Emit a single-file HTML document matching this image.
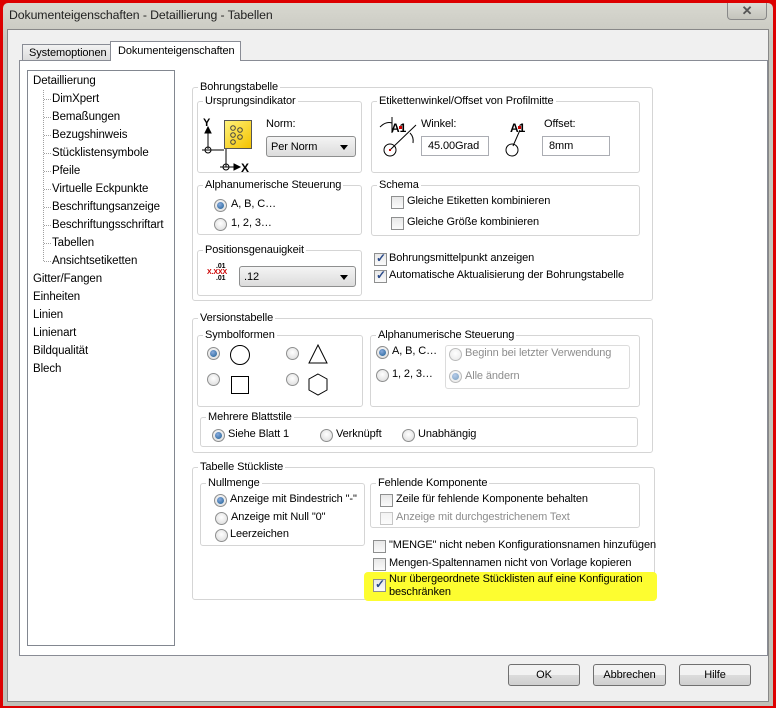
<!DOCTYPE html>
<html><head><meta charset="utf-8"><style>
*{box-sizing:border-box;margin:0;padding:0}
body{width:776px;height:708px;position:relative;overflow:hidden;background:#d00;font-family:"Liberation Sans",Arial,sans-serif;font-size:11px;letter-spacing:-0.1px;color:#000}
.a{position:absolute;white-space:nowrap}
.g{position:absolute;border:1px solid #d5d5d5;border-radius:3px}
.gl{position:absolute;background:#fff;padding:0 2px;top:-8px;left:5px;line-height:14px;white-space:nowrap}
.rb{position:absolute;width:13px;height:13px;border-radius:50%;border:1px solid #8e8f8f;background:radial-gradient(circle at 50% 40%,#fff,#d8d8d8)}
.rb.on::after{content:"";position:absolute;left:2px;top:2px;width:7px;height:7px;border-radius:50%;background:radial-gradient(circle at 40% 35%,#8ad,#1d5f93)}
.rb.dis{opacity:.6}
.cb{position:absolute;width:13px;height:13px;border:1px solid #8e8f8f;background:linear-gradient(#e8e8e8,#fafafa)}
.cb.on::after{content:"✓";position:absolute;left:1px;top:-3px;font-size:12px;color:#2a4a8a;font-weight:bold}
.dd{position:absolute;border:1px solid #8e8f8f;border-radius:3px;background:linear-gradient(#f4f4f4,#dcdcdc);padding-left:4px;line-height:20px}
.dd::after{content:"";position:absolute;right:7px;top:8px;border:4px solid transparent;border-top:5px solid #000;border-bottom:0}
.tb{position:absolute;border:1px solid #abadb3;background:#fff;padding-left:6px;line-height:18px}
.btn{position:absolute;border:1px solid #707070;border-radius:3px;background:linear-gradient(#f2f2f2 50%,#dcdcdc 50%,#cfcfcf);text-align:center;line-height:20px}
.dis{color:#8d8d8d}
</style></head><body>
<div class="a" style="left:3px;top:3px;width:770px;height:703px;background:linear-gradient(#d8d8d0,#c6c6be 40px,#c0c0b8);border-radius:5px 5px 0 0"></div>
<div class="a" style="left:9px;top:8px;font-size:12.3px;color:#222">Dokumenteigenschaften - Detaillierung - Tabellen</div>
<div class="a" style="left:727px;top:3px;width:40px;height:17px;border:1px solid #888;border-top:0;border-radius:0 0 4px 4px;background:linear-gradient(#dcdcd6,#c4c4bc);text-align:center;font-weight:bold;font-size:13px;line-height:15px;color:#555">✕</div>
<div class="a" style="left:7px;top:29px;width:762px;height:673px;background:#f0f0f0;border:1px solid #888"></div>
<div class="a" style="left:19px;top:60px;width:749px;height:596px;background:#fff;border:1px solid #898c95"></div>
<div class="a" style="left:22px;top:44px;width:89px;height:17px;border:1px solid #898c95;background:linear-gradient(#f2f2f2,#dcdcdc);padding-left:6px;line-height:16px">Systemoptionen</div>
<div class="a" style="left:110px;top:41px;width:131px;height:20px;border:1px solid #898c95;border-bottom:0;background:#fff;padding-left:7px;line-height:18px">Dokumenteigenschaften</div>
<div class="a" style="left:27px;top:70px;width:148px;height:576px;border:1px solid #828790;background:#fff"></div>
<div class="a" style="left:43px;top:90px;width:0;height:171px;border-left:1px dotted #a0a0a0"></div>
<div id="tree"></div>
<script>
var t=[["Detaillierung",0],["DimXpert",1],["Bemaßungen",1],["Bezugshinweis",1],["Stücklistensymbole",1],["Pfeile",1],["Virtuelle Eckpunkte",1],["Beschriftungsanzeige",1],["Beschriftungsschriftart",1],["Tabellen",1],["Ansichtsetiketten",1],["Gitter/Fangen",0],["Einheiten",0],["Linien",0],["Linienart",0],["Bildqualität",0],["Blech",0]];
var h="";t.forEach(function(e,i){var y=81+18*i;h+='<div class="a" style="left:'+(e[1]?52:33)+'px;top:'+(y-8)+'px;line-height:16px;font-size:11.5px">'+e[0]+'</div>';if(e[1])h+='<div class="a" style="left:44px;top:'+y+'px;width:7px;border-top:1px dotted #a0a0a0"></div>';});
document.getElementById("tree").outerHTML=h;
</script>

<div class="g" style="left:192px;top:87px;width:461px;height:214px"><span class="gl">Bohrungstabelle</span></div>
<div class="g" style="left:197px;top:101px;width:165px;height:72px"><span class="gl">Ursprungsindikator</span></div>
<svg class="a" style="left:198px;top:115px" width="60" height="60"><text x="5" y="11" font-size="11" font-weight="bold" font-family="Liberation Sans">Y</text><path d="M10 12V34M7 18L10 12L13 18Z" stroke="#000" fill="#000"/><circle cx="10" cy="35" r="3" fill="none" stroke="#000"/><path d="M4 35H26" stroke="#000"/><path d="M28 28V52" stroke="#000"/><circle cx="28" cy="52" r="3" fill="none" stroke="#000"/><path d="M22 52H42M36 49L42 52L36 55Z" stroke="#000" fill="#000"/><text x="43" y="57" font-size="12" font-weight="bold" font-family="Liberation Sans">X</text></svg>
<div class="a" style="left:224px;top:120px;width:28px;height:29px;border:1px solid #555;background:linear-gradient(135deg,#fff27a,#f4c200)"></div>
<svg class="a" style="left:224px;top:120px" width="28" height="29"><g fill="none" stroke="#444"><circle cx="9" cy="8" r="2.3"/><circle cx="16" cy="10" r="2.3"/><circle cx="9" cy="15" r="2.3"/><circle cx="16" cy="17" r="2.3"/><circle cx="9" cy="22" r="2.3"/></g></svg>
<div class="a" style="left:266px;top:118px">Norm:</div>
<div class="dd" style="left:266px;top:136px;width:90px;height:21px">Per Norm</div>

<div class="g" style="left:371px;top:101px;width:269px;height:72px"><span class="gl">Etikettenwinkel/Offset von Profilmitte</span></div>
<svg class="a" style="left:376px;top:113px" width="50" height="50"><path d="M4 14Q10 8 16 10" fill="none" stroke="#000"/><path d="M16 4V20" stroke="#000"/><text x="15" y="19" font-size="12" font-weight="bold" font-family="Liberation Sans">A1</text><rect x="23" y="13" width="3" height="3" fill="#c00"/><circle cx="14" cy="37" r="6" fill="none" stroke="#000"/><path d="M14 37L40 12" stroke="#000"/><path d="M34 20Q38 24 37 30" fill="none" stroke="#000"/><rect x="13" y="36" width="2" height="2" fill="#c00"/></svg>
<div class="a" style="left:421px;top:118px">Winkel:</div>
<div class="tb" style="left:421px;top:136px;width:68px;height:20px">45.00Grad</div>
<svg class="a" style="left:500px;top:113px" width="40" height="50"><text x="10" y="19" font-size="12" font-weight="bold" font-family="Liberation Sans">A1</text><rect x="18" y="13" width="3" height="3" fill="#c00"/><circle cx="12" cy="37" r="6" fill="none" stroke="#000"/><path d="M13 33L20 17" stroke="#000"/></svg>
<div class="a" style="left:544px;top:118px">Offset:</div>
<div class="tb" style="left:542px;top:136px;width:68px;height:20px">8mm</div>

<div class="g" style="left:197px;top:185px;width:165px;height:50px"><span class="gl">Alphanumerische Steuerung</span></div>
<div class="rb on" style="left:214px;top:199px"></div><div class="a" style="left:231px;top:198px">A, B, C…</div>
<div class="rb" style="left:214px;top:218px"></div><div class="a" style="left:231px;top:217px">1, 2, 3…</div>

<div class="g" style="left:371px;top:185px;width:269px;height:51px"><span class="gl">Schema</span></div>
<div class="cb" style="left:391px;top:196px"></div><div class="a" style="left:407px;top:195px">Gleiche Etiketten kombinieren</div>
<div class="cb" style="left:391px;top:217px"></div><div class="a" style="left:407px;top:216px">Gleiche Größe kombinieren</div>

<div class="g" style="left:197px;top:250px;width:165px;height:46px"><span class="gl">Positionsgenauigkeit</span></div>
<div class="a" style="left:207px;top:264px;font-size:7px;line-height:6px;color:#c00;font-weight:bold"><span style="color:#000;margin-left:9px">.01</span><br>X.XXX<br><span style="color:#000;margin-left:9px">.01</span></div>
<div class="dd" style="left:239px;top:266px;width:117px;height:21px">.12</div>
<div class="cb on" style="left:374px;top:253px"></div><div class="a" style="left:389px;top:252px">Bohrungsmittelpunkt anzeigen</div>
<div class="cb on" style="left:374px;top:270px"></div><div class="a" style="left:389px;top:269px">Automatische Aktualisierung der Bohrungstabelle</div>

<div class="g" style="left:192px;top:318px;width:461px;height:135px"><span class="gl">Versionstabelle</span></div>
<div class="g" style="left:197px;top:335px;width:166px;height:72px"><span class="gl">Symbolformen</span></div>
<div class="rb on" style="left:207px;top:347px"></div>
<svg class="a" style="left:229px;top:344px" width="22" height="22"><circle cx="11" cy="11" r="9.5" fill="none" stroke="#000"/></svg>
<div class="rb" style="left:286px;top:347px"></div>
<svg class="a" style="left:307px;top:343px" width="22" height="22"><path d="M11 2L20 20H2Z" fill="none" stroke="#000"/></svg>
<div class="rb" style="left:207px;top:373px"></div>
<svg class="a" style="left:230px;top:375px" width="20" height="20"><rect x="1.5" y="1.5" width="17" height="17" fill="none" stroke="#000"/></svg>
<div class="rb" style="left:286px;top:373px"></div>
<svg class="a" style="left:307px;top:373px" width="22" height="24"><path d="M11 1L20 6V17L11 22L2 17V6Z" fill="none" stroke="#000"/></svg>

<div class="g" style="left:370px;top:335px;width:270px;height:72px"><span class="gl">Alphanumerische Steuerung</span></div>
<div class="rb on" style="left:376px;top:346px"></div><div class="a" style="left:392px;top:345px">A, B, C…</div>
<div class="rb" style="left:376px;top:369px"></div><div class="a" style="left:392px;top:368px">1, 2, 3…</div>
<div class="a" style="left:445px;top:345px;width:185px;height:44px;border:1px solid #dcdcdc;border-radius:3px"></div>
<div class="rb dis" style="left:449px;top:348px"></div><div class="a dis" style="left:465px;top:347px">Beginn bei letzter Verwendung</div>
<div class="rb on dis" style="left:449px;top:370px"></div><div class="a dis" style="left:465px;top:370px">Alle ändern</div>

<div class="g" style="left:200px;top:417px;width:438px;height:30px"><span class="gl">Mehrere Blattstile</span></div>
<div class="rb on" style="left:212px;top:429px"></div><div class="a" style="left:228px;top:428px">Siehe Blatt 1</div>
<div class="rb" style="left:320px;top:429px"></div><div class="a" style="left:336px;top:428px">Verknüpft</div>
<div class="rb" style="left:402px;top:429px"></div><div class="a" style="left:418px;top:428px">Unabhängig</div>

<div class="g" style="left:192px;top:467px;width:463px;height:133px"><span class="gl">Tabelle Stückliste</span></div>
<div class="g" style="left:200px;top:483px;width:165px;height:63px"><span class="gl">Nullmenge</span></div>
<div class="rb on" style="left:214px;top:494px"></div><div class="a" style="left:230px;top:493px">Anzeige mit Bindestrich "-"</div>
<div class="rb" style="left:215px;top:512px"></div><div class="a" style="left:231px;top:511px">Anzeige mit Null "0"</div>
<div class="rb" style="left:215px;top:529px"></div><div class="a" style="left:230px;top:528px">Leerzeichen</div>
<div class="g" style="left:370px;top:483px;width:270px;height:45px"><span class="gl">Fehlende Komponente</span></div>
<div class="cb" style="left:380px;top:494px"></div><div class="a" style="left:396px;top:493px">Zeile für fehlende Komponente behalten</div>
<div class="cb" style="left:380px;top:512px;opacity:.5"></div><div class="a dis" style="left:396px;top:511px">Anzeige mit durchgestrichenem Text</div>
<div class="cb" style="left:373px;top:540px"></div><div class="a" style="left:389px;top:539px">"MENGE" nicht neben Konfigurationsnamen hinzufügen</div>
<div class="cb" style="left:373px;top:558px"></div><div class="a" style="left:389px;top:557px">Mengen-Spaltennamen nicht von Vorlage kopieren</div>
<div class="a" style="left:364px;top:572px;width:293px;height:29px;background:#fdfd30;border-radius:4px"></div>
<div class="cb on" style="left:373px;top:579px"></div>
<div class="a" style="left:389px;top:573px;line-height:13px">Nur übergeordnete Stücklisten auf eine Konfiguration<br>beschränken</div>

<div class="btn" style="left:508px;top:664px;width:72px;height:22px">OK</div>
<div class="btn" style="left:593px;top:664px;width:73px;height:22px">Abbrechen</div>
<div class="btn" style="left:679px;top:664px;width:72px;height:22px">Hilfe</div>
</body></html>
